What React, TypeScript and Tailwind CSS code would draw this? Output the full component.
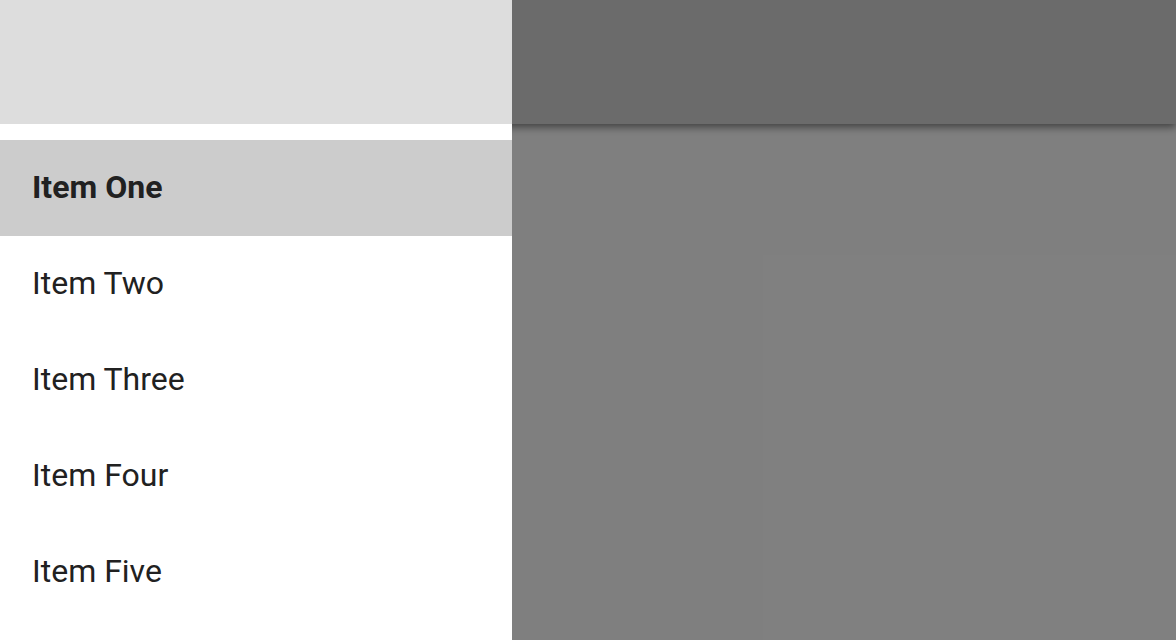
import React from "react";

const items = ["Item One", "Item Two", "Item Three", "Item Four", "Item Five"];

export default function App() {
  return (
    <div
      className="relative w-[1176px] h-[640px] overflow-hidden bg-white"
      style={{ fontFamily: "Roboto, 'Noto Sans', sans-serif" }}
    >
      <header className="relative z-10 h-[124px] w-full bg-[#d6d6d6] shadow-[0_3px_8px_rgba(0,0,0,0.5)]" />
      <main className="h-[516px] bg-white" />
      <div className="absolute inset-0 z-20 bg-black/50" />
      <nav className="absolute left-0 top-0 bottom-0 z-30 w-[512px] bg-white flex flex-col">
        <div className="h-[124px] bg-[#dddddd]" />
        <ul className="pt-4 flex flex-col">
          {items.map((it, i) => (
            <li
              key={it}
              className={
                "h-[96px] flex items-center px-8 pb-[2px] text-[32px] text-[#212121] " +
                (i === 0 ? "bg-[#cccccc] font-bold" : "font-normal")
              }
            >
              {it}
            </li>
          ))}
        </ul>
      </nav>
    </div>
  );
}
